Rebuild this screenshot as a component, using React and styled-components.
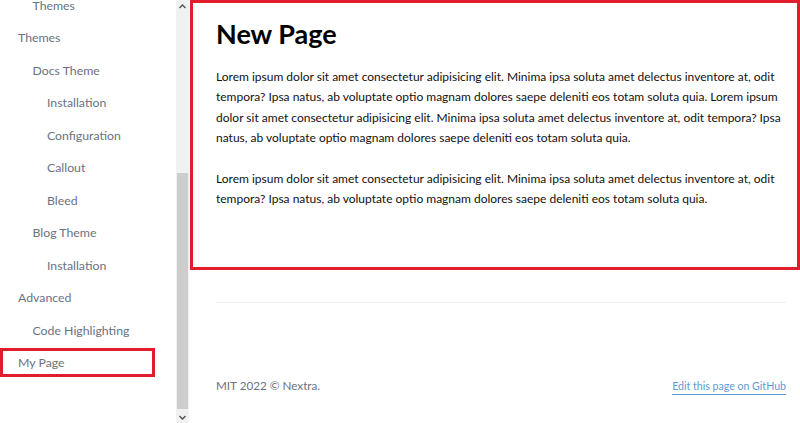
import React from "react";
import styled, { createGlobalStyle } from "styled-components";

const Global = createGlobalStyle`
  html, body { margin: 0; padding: 0; background: #fff; }
  body { font-family: Lato, "Open Sans", sans-serif; overflow: hidden; }
  * { box-sizing: border-box; }
`;

const Layout = styled.div`
  display: flex;
  width: 800px;
  height: 423px;
  overflow: hidden;
`;

const Sidebar = styled.aside`
  display: flex;
  width: 189px;
  flex-shrink: 0;
  height: 423px;
`;

const NavList = styled.nav`
  flex: 1;
  display: flex;
  flex-direction: column;
  overflow: hidden;
`;

const NavInner = styled.div`
  display: flex;
  flex-direction: column;
  gap: 3.5px;
  margin-top: -9.5px;
`;

const NavItem = styled.a`
  display: flex;
  align-items: center;
  width: 155px;
  height: 29px;
  flex-shrink: 0;
  padding-left: ${(p) => 18 + p.$level * 14.5 - (p.$active ? 3 : 0)}px;
  font-size: 12.3px;
  color: #6b7280;
  text-decoration: none;
  border: ${(p) => (p.$active ? "3px solid #e11d2b" : "none")};
`;

const Scrollbar = styled.div`
  width: 13px;
  flex-shrink: 0;
  background: #f1f1f1;
  display: flex;
  flex-direction: column;
  align-items: stretch;
`;

const ScrollButton = styled.div`
  height: 12px;
  display: flex;
  align-items: center;
  justify-content: center;
  flex-shrink: 0;
`;

const ScrollTrack = styled.div`
  flex: 1;
  display: flex;
  flex-direction: column;
  justify-content: flex-end;
  padding: 0 1px 2px 1px;
`;

const Thumb = styled.div`
  height: 236px;
  background: #cdcdcd;
`;

const Main = styled.main`
  flex: 1;
  display: flex;
  flex-direction: column;
  padding-left: 1px;
`;

const Article = styled.article`
  height: 270px;
  border: 3px solid #e11d2b;
  padding: 13px 11px 0 23px;
`;

const Title = styled.h1`
  margin: 0 0 15px 0;
  font-size: 27px;
  font-weight: 700;
  line-height: 36px;
  color: #000;
`;

const Para = styled.p`
  margin: 0 0 21px 0;
  font-size: 12px;
  line-height: 20.3px;
  color: #111;
`;

const FooterArea = styled.div`
  padding: 0 14px 0 26px;
  display: flex;
  flex-direction: column;
`;

const Separator = styled.hr`
  margin: 32px 0 0 0;
  border: none;
  border-top: 1px solid #eeeeee;
`;

const Footer = styled.footer`
  display: flex;
  justify-content: space-between;
  align-items: center;
  margin-top: 72px;
`;

const Copyright = styled.span`
  color: #6b7280;
  font-size: 11.7px;
`;

const EditLink = styled.a`
  color: #5b9bd5;
  font-size: 10.6px;
  text-decoration: none;
  border-bottom: 1px solid #5b9bd5;
  line-height: 15px;
  margin-top: 4px;
`;

const Arrow = ({ down }) => (
  <svg width="7" height="5" viewBox="0 0 7 5">
    <path
      d={down ? "M0.5 1 L3.5 4 L6.5 1" : "M0.5 4 L3.5 1 L6.5 4"}
      fill="none"
      stroke="#505050"
      strokeWidth="1.4"
    />
  </svg>
);

const items = [
  ["Themes", 1],
  ["Themes", 0],
  ["Docs Theme", 1],
  ["Installation", 2],
  ["Configuration", 2],
  ["Callout", 2],
  ["Bleed", 2],
  ["Blog Theme", 1],
  ["Installation", 2],
  ["Advanced", 0],
  ["Code Highlighting", 1],
  ["My Page", 0, true],
];

const lorem =
  "Lorem ipsum dolor sit amet consectetur adipisicing elit. Minima ipsa soluta amet delectus inventore at, odit tempora? Ipsa natus, ab voluptate optio magnam dolores saepe deleniti eos totam soluta quia.";

export default function App() {
  return (
    <>
      <Global />
      <Layout>
        <Sidebar>
          <NavList>
            <NavInner>
              {items.map(([label, level, active], i) => (
                <NavItem key={i} $level={level} $active={active}>
                  {label}
                </NavItem>
              ))}
            </NavInner>
          </NavList>
          <Scrollbar>
            <ScrollButton>
              <Arrow />
            </ScrollButton>
            <ScrollTrack>
              <Thumb />
            </ScrollTrack>
            <ScrollButton>
              <Arrow down />
            </ScrollButton>
          </Scrollbar>
        </Sidebar>
        <Main>
          <Article>
            <Title>New Page</Title>
            <Para>
              {lorem} {lorem}
            </Para>
            <Para>{lorem}</Para>
          </Article>
          <FooterArea>
            <Separator />
            <Footer>
              <Copyright>MIT 2022 © Nextra.</Copyright>
              <EditLink>Edit this page on GitHub</EditLink>
            </Footer>
          </FooterArea>
        </Main>
      </Layout>
    </>
  );
}
